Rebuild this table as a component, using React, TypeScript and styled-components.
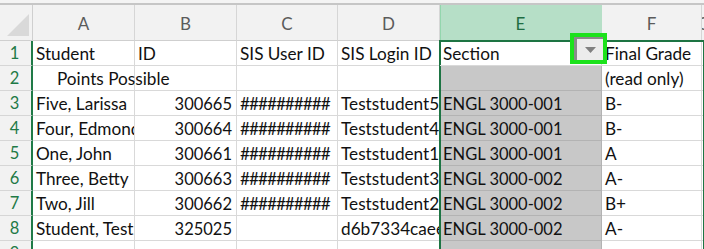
import React from "react";
import styled, { createGlobalStyle, css } from "styled-components";

const Global = createGlobalStyle`
  html, body { margin: 0; padding: 0; background: #ffffff; overflow: hidden; }
  body { font-family: Lato, "Open Sans", sans-serif; }
`;

const Page = styled.div`
  width: 704px;
  height: 249px;
  overflow: hidden;
  display: flex;
  flex-direction: column;
`;

const TopStrip = styled.div`
  height: 3px;
  flex: none;
  background: #f4f4f4;
  border-bottom: 2px solid #c6c6c6;
`;

const Sheet = styled.div`
  display: grid;
  grid-template-columns: 33px 102px 102px 101px 102px 162px 100px 1fr;
  grid-template-rows: 36px repeat(9, 25px);
  background: #ffffff;
  position: relative;
`;

const Corner = styled.div`
  background: #f2f2f2;
  border-right: 1px solid #cfcfcf;
  border-bottom: 1px solid #cfcfcf;
  display: flex;
  align-items: flex-end;
  justify-content: flex-end;
  padding: 0 3px 4px 0;
`;

const ColHead = styled.div<{ $active?: boolean }>`
  background: #f2f2f2;
  border-right: 1px solid #d6d6d6;
  border-bottom: 1px solid #cfcfcf;
  display: flex;
  align-items: center;
  justify-content: center;
  font-size: 17px;
  color: #5b5b5b;
  padding-top: 2px;
  overflow: hidden;
  min-width: 0;
  ${(p) =>
    p.$active &&
    css`
      background: #b6dfc7;
      color: #1e6d42;
      box-shadow: inset 1px 0 0 #93d6ad;
      border-right-color: #b6dfc7;
    `}
`;

const RowHead = styled.div`
  background: #f2f2f2;
  border-bottom: 1px solid #d6d6d6;
  border-right: 2px solid #1f7a47;
  display: flex;
  align-items: center;
  justify-content: center;
  font-size: 16.5px;
  color: #1f7a47;
  padding-right: 2px;
`;

const Cell = styled.div<{
  $align?: "left" | "right";
  $indent?: number;
  $spill?: boolean;
  $sel?: boolean;
  $tight?: boolean;
}>`
  border-right: 1px solid #d9d9d9;
  border-bottom: 1px solid #d9d9d9;
  display: flex;
  align-items: center;
  justify-content: ${(p) => (p.$align === "right" ? "flex-end" : "flex-start")};
  padding: 1px ${(p) => (p.$align === "right" ? 4 : 0)}px 0 ${(p) => 3 + (p.$indent ?? 0)}px;
  font-size: ${(p) => (p.$align === "right" ? 16.5 : 17.2)}px;
  letter-spacing: ${(p) => (p.$tight ? "-1px" : "0")};
  color: #111111;
  white-space: nowrap;
  overflow: ${(p) => (p.$spill ? "visible" : "hidden")};
  min-width: 0;
  ${(p) =>
    p.$sel &&
    css`
      background: #c8c8c8;
      border-bottom-color: #b3b3b3;
      border-right-color: #b3b3b3;
      font-size: 16.5px;
    `}
`;

const ActiveCell = styled(Cell)`
  overflow: visible;
  justify-content: space-between;
  align-items: stretch;
  position: relative;
  z-index: 3;
  padding-right: 0;
`;

const CellText = styled.span`
  align-self: center;
`;

const DropButton = styled.div`
  box-sizing: border-box;
  width: 29px;
  height: 23px;
  margin: -5px -2px 0 0;
  background: #ececec;
  border-left: 3px solid #8a8a8a;
  border-top: 2px solid #8a8a8a;
  outline: 4px solid #1be21b;
  display: flex;
  align-items: center;
  justify-content: center;
`;

const SelectionFrame = styled.div`
  grid-column: 6;
  grid-row: 2 / -1;
  position: absolute;
  top: -1px;
  left: -1px;
  right: -1px;
  bottom: 0;
  border: 2px solid #1d7443;
  border-bottom: none;
  pointer-events: none;
  z-index: 2;
`;

const Triangle = () => (
  <svg width="11" height="6" viewBox="0 0 11 6">
    <polygon points="0,0 11,0 5.5,6" fill="#808080" />
  </svg>
);

const CornerMark = () => (
  <svg width="22" height="22" viewBox="0 0 22 22">
    <polygon points="0,22 22,22 22,0" fill="#d9d9d9" />
  </svg>
);

type Row = {
  a?: string;
  b?: string;
  c?: string;
  d?: string;
  e?: string;
  f?: string;
  indentA?: boolean;
};

const rows: Row[] = [
  { a: "Student", b: "ID", c: "SIS User ID", d: "SIS Login ID", e: "Section", f: "Final Grade" },
  { a: "Points Possible", indentA: true, f: "(read only)" },
  { a: "Five, Larissa", b: "300665", c: "##########", d: "Teststudent5", e: "ENGL 3000-001", f: "B-" },
  { a: "Four, Edmond", b: "300664", c: "##########", d: "Teststudent4", e: "ENGL 3000-001", f: "B-" },
  { a: "One, John", b: "300661", c: "##########", d: "Teststudent1", e: "ENGL 3000-001", f: "A" },
  { a: "Three, Betty", b: "300663", c: "##########", d: "Teststudent3", e: "ENGL 3000-002", f: "A-" },
  { a: "Two, Jill", b: "300662", c: "##########", d: "Teststudent2", e: "ENGL 3000-002", f: "B+" },
  { a: "Student, Test", b: "325025", d: "d6b7334caee9", e: "ENGL 3000-002", f: "A-" },
  {},
];

const letters = ["A", "B", "C", "D", "E", "F", "G"];

export default function App() {
  return (
    <Page>
      <Global />
      <TopStrip />
      <Sheet>
        <Corner>
          <CornerMark />
        </Corner>
        {letters.map((l) => (
          <ColHead key={l} $active={l === "E"}>
            {l}
          </ColHead>
        ))}
        {rows.map((r, i) => (
          <React.Fragment key={i}>
            <RowHead>{i + 1}</RowHead>
            <Cell $spill={r.indentA} $indent={r.indentA ? 21 : 0}>
              {r.a}
            </Cell>
            <Cell $align={r.b && /^\d+$/.test(r.b) ? "right" : "left"}>{r.b}</Cell>
            <Cell $tight={r.c?.startsWith("#")}>{r.c}</Cell>
            <Cell>{r.d}</Cell>
            {i === 0 ? (
              <ActiveCell>
                <CellText>{r.e}</CellText>
                <DropButton>
                  <Triangle />
                </DropButton>
              </ActiveCell>
            ) : (
              <Cell $sel>{r.e}</Cell>
            )}
            <Cell>{r.f}</Cell>
            <Cell />
          </React.Fragment>
        ))}
        <SelectionFrame />
      </Sheet>
    </Page>
  );
}
